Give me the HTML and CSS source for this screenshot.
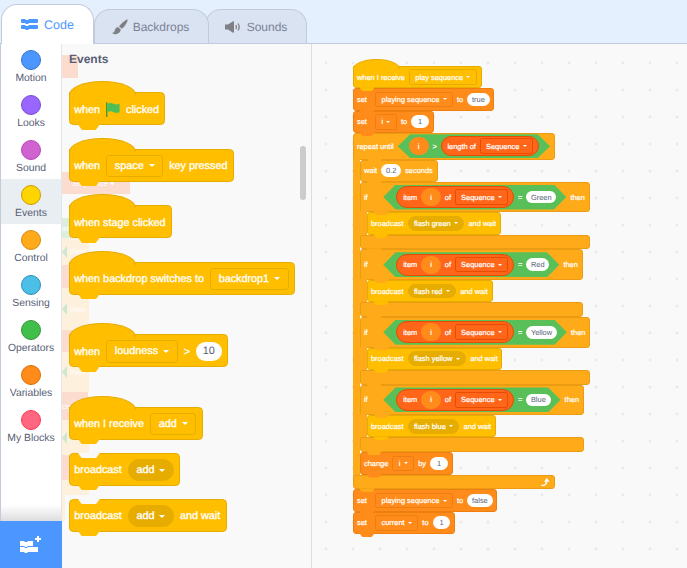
FILE: index.html
```html
<!DOCTYPE html>
<html lang="en">
<head>
  <meta charset="UTF-8">
  <title>Scratch Editor</title>
  <link rel="stylesheet" href="styles.css">
</head>
<body>
  <div class="tabs">
    <div class="tab tab-active">
      <svg class="tab-icon" width="17" height="11" viewBox="0 0 17 11"><path fill="#4c97ff" d="M1 0h3l1 1h2l1-1h8a1 1 0 0 1 1 1v2a1 1 0 0 1-1 1H8L7 5H5L4 4H1a1 1 0 0 1-1-1V1a1 1 0 0 1 1-1zM1 6h3l1 1h2l1-1h8a1 1 0 0 1 1 1v2a1 1 0 0 1-1 1H8l-1 1H5L4 10H1a1 1 0 0 1-1-1V7a1 1 0 0 1 1-1z"/></svg>
      Code
    </div>
    <div class="tab tab-backdrops">
      <svg class="tab-icon" width="16" height="16" viewBox="0 0 16 16"><path fill="#7f8085" d="M15.5.6c.6.5-.6 3.800-3 6.600L9.800 9.800 6.900 7.200 9.600 4.500C12 2.200 14.900.1 15.500.6zM6 8l2.800 2.600C8.500 13.300 6.400 15.500 3 15.300 1.600 15.200.5 14.600 0 13.800c1.500.2 2.300-.6 2.600-2C3 9.800 4.300 8.300 6 8z"/></svg>
      Backdrops
    </div>
    <div class="tab tab-sounds">
      <svg class="tab-icon" width="16" height="12" viewBox="0 0 16 12"><path fill="#7f8085" d="M0 3.500h3L8 .3c.5-.3 1 0 1 .6v10.200c0 .6-.5.9-1 .6L3 8.500H0z"/><path fill="none" stroke="#7f8085" stroke-width="1.300" d="M10.800 4c.8 1.200.8 2.800 0 4M13 2.500c1.400 2 1.400 5 0 7"/></svg>
      Sounds
    </div>
  </div>

  <div class="workspace">
    <div class="sidebar">
      <div class="cat"><span class="dot motion"></span>Motion</div>
      <div class="cat"><span class="dot looks"></span>Looks</div>
      <div class="cat"><span class="dot sound"></span>Sound</div>
      <div class="cat cat-active"><span class="dot event"></span>Events</div>
      <div class="cat"><span class="dot ctrl"></span>Control</div>
      <div class="cat"><span class="dot sensing"></span>Sensing</div>
      <div class="cat"><span class="dot operators"></span>Operators</div>
      <div class="cat"><span class="dot variables"></span>Variables</div>
      <div class="cat"><span class="dot myblocks"></span>My Blocks</div>
      <div class="side-fade"></div>
      <div class="ext-btn">
        <svg width="22" height="18" viewBox="0 0 22 18"><path fill="#fff" d="M0 5h4l1 1h2l1-1h5v5H8l-1 1H5L4 10H0zM0 11h4l1 1h2l1-1h10v5H8l-1 1H5l-1-1H0zM15 2h2V0h2v2h2v2h-2v2h-2V4h-2z"/></svg>
      </div>
    </div>

    <div class="palette">
      <div class="ghosts">
        <div class="ghost pink g-first"></div>
        <div class="ghost pink g-seq">Sequence ▾</div>
        <div class="ghost green g-green">ar</div>
        <div class="ghost peach g-27"><i></i>then</div>
        <div class="ghost pink g-23">e</div>
        <div class="ghost peach g-42"><i></i>then</div>
        <div class="ghost pink g-22"></div>
        <div class="ghost peach g-40"><i></i>then</div>
        <div class="ghost pink g-28">ce</div>
        <div class="ghost peach g-35"><i></i>then</div>
        <div class="ghost pink g-25"></div>
        <div class="ghost peach g-15"></div>
        <div class="ghost peach g-thin"></div>
      </div>

      <div class="palette-title">Events</div>
      <div class="palette-blocks">
        <div class="block events hat">
          when
          <svg class="flag" viewBox="0 0 15 16"><path fill="#45993d" d="M0 0h1.500v16H0z"/><path fill="#4cbf56" d="M1.500 1.500C4 .2 6 .5 8 1.500s4 1 6.500 0v9c-2.500 1-4.500 1-6.500 0s-4-1.300-6.500 0z"/></svg>
          clicked
        </div>
        <div class="block events hat">when <span class="menu">space <b class="caret"></b></span> key pressed</div>
        <div class="block events hat">when stage clicked</div>
        <div class="block events hat">when backdrop switches to <span class="menu">backdrop1 <b class="caret"></b></span></div>
        <div class="block events hat far">when <span class="menu">loudness <b class="caret"></b></span> &gt; <span class="num">10</span></div>
        <div class="block events hat far">when I receive <span class="menu">add <b class="caret"></b></span></div>
        <div class="block events notch">broadcast <span class="round-menu">add <b class="caret"></b></span></div>
        <div class="block events notch">broadcast <span class="round-menu">add <b class="caret"></b></span> and wait</div>
      </div>
      <div class="scroll-thumb"></div>
    </div>

    <div class="scripts">
      <div class="stack">
        <div class="block events hat">when I receive <span class="menu">play sequence <b class="caret"></b></span></div>
        <div class="block vars"><span class="lbl-set">set</span> <span class="menu">playing sequence <b class="caret"></b></span> to <span class="num">true</span></div>
        <div class="block vars"><span class="lbl-set">set</span> <span class="menu">i <b class="caret"></b></span> to <span class="num one">1</span></div>

        <div class="c-block control">
          <div class="block c-head head-repeat">
            repeat until
            <span class="bool bool-repeat">
              <span class="oval var-oval">i</span> &gt;
              <span class="oval list-oval">length of <span class="menu">Sequence <b class="caret"></b></span></span>
            </span>
          </div>
          <div class="c-mouth">
            <div class="block">wait <span class="num">0.2</span> seconds</div>

            <div class="c-block">
              <div class="block c-head">
                <span class="lbl-if">if</span>
                <span class="bool">
                  <span class="oval list-oval">item <span class="oval var-oval">i</span> of <span class="menu">Sequence <b class="caret"></b></span></span>
                  = <span class="num">Green</span>
                </span>
                then
              </div>
              <div class="c-mouth">
                <div class="block events">broadcast <span class="round-menu">flash green <b class="caret"></b></span> and wait</div>
              </div>
              <div class="block c-foot"></div>
            </div>

            <div class="c-block">
              <div class="block c-head">
                <span class="lbl-if">if</span>
                <span class="bool">
                  <span class="oval list-oval">item <span class="oval var-oval">i</span> of <span class="menu">Sequence <b class="caret"></b></span></span>
                  = <span class="num">Red</span>
                </span>
                then
              </div>
              <div class="c-mouth">
                <div class="block events">broadcast <span class="round-menu">flash red <b class="caret"></b></span> and wait</div>
              </div>
              <div class="block c-foot"></div>
            </div>

            <div class="c-block">
              <div class="block c-head">
                <span class="lbl-if">if</span>
                <span class="bool">
                  <span class="oval list-oval">item <span class="oval var-oval">i</span> of <span class="menu">Sequence <b class="caret"></b></span></span>
                  = <span class="num">Yellow</span>
                </span>
                then
              </div>
              <div class="c-mouth">
                <div class="block events">broadcast <span class="round-menu">flash yellow <b class="caret"></b></span> and wait</div>
              </div>
              <div class="block c-foot"></div>
            </div>

            <div class="c-block">
              <div class="block c-head">
                <span class="lbl-if">if</span>
                <span class="bool">
                  <span class="oval list-oval">item <span class="oval var-oval">i</span> of <span class="menu">Sequence <b class="caret"></b></span></span>
                  = <span class="num">Blue</span>
                </span>
                then
              </div>
              <div class="c-mouth">
                <div class="block events">broadcast <span class="round-menu">flash blue <b class="caret"></b></span> and wait</div>
              </div>
              <div class="block c-foot"></div>
            </div>

            <div class="block vars">change <span class="menu">i <b class="caret"></b></span> by <span class="num one">1</span></div>
          </div>
          <div class="block c-foot foot-loop">
            <svg class="loop" viewBox="0 0 10 9"><path fill="none" stroke="#fff" stroke-width="1.600" d="M0.500 7.800c3 .4 5.200-.6 5.600-4.300"/><path fill="#fff" d="M3.300 4 6.200 0 9.300 4z"/></svg>
          </div>
        </div>

        <div class="block vars"><span class="lbl-set">set</span> <span class="menu">playing sequence <b class="caret"></b></span> to <span class="num">false</span></div>
        <div class="block vars"><span class="lbl-set">set</span> <span class="menu">current <b class="caret"></b></span> to <span class="num one">1</span></div>
      </div>
    </div>
  </div>
</body>
</html>
```

FILE: styles.css
```css
* {
  box-sizing: border-box;
}

body {
  margin: 0;
  height: 568px;
  overflow: hidden;
  background-color: #e5f0ff;
  font-family: "Liberation Sans", Arial, sans-serif;
  color: #575e75;
  text-rendering: geometricPrecision;
}

/* Tabs */
.tabs {
  display: flex;
  align-items: flex-end;
  height: 43px;
  padding-left: 1px;
}

.tab {
  display: flex;
  align-items: center;
  justify-content: center;
  gap: 6px;
  height: 34px;
  font-size: 12px;
  color: #7c8296;
  background-color: #d9e3f2;
  border: 1px solid #c1cbda;
  border-bottom: none;
  border-radius: 16px 16px 0 0;
}

.tab-active {
  position: relative;
  z-index: 2;
  width: 93px;
  height: 40px;
  margin-bottom: -1px;
  font-size: 12.5px;
  color: #4c97ff;
  background-color: #fff;
}

.tab-backdrops {
  position: relative;
  z-index: 1;
  width: 115px;
  gap: 5px;
  padding-right: 2px;
}

.tab-sounds {
  width: 102px;
  margin-left: -4px;
}

/* Layout */
.workspace {
  display: flex;
  height: 525px;
  background-color: #f9f9f9;
  border-top: 1px solid #c1cbda;
}

.sidebar {
  display: flex;
  flex-direction: column;
  flex: none;
  width: 62px;
  background-color: #fff;
  border-left: 1px solid #c1cbda;
  border-right: 1px solid #e2e6ec;
}

.cat {
  display: flex;
  flex-direction: column;
  align-items: center;
  height: 45px;
  padding-top: 6px;
  font-size: 10.4px;
  line-height: 13px;
  white-space: nowrap;
}

.cat-active {
  background-color: #e9eef2;
}

.dot {
  width: 20px;
  height: 20px;
  margin-bottom: 2px;
  border-radius: 50%;
  border: 1px solid;
}

.motion { background-color: #4c97ff; border-color: #3373cc; }
.looks { background-color: #9966ff; border-color: #774dcb; }
.sound { background-color: #cf63cf; border-color: #bd42bd; }
.event { background-color: #ffd500; border-color: #cc9900; }
.ctrl { background-color: #ffab19; border-color: #cf8b17; }
.sensing { background-color: #4cbfe6; border-color: #2e8eb8; }
.operators { background-color: #40bf4a; border-color: #389438; }
.variables { background-color: #ff8c1a; border-color: #db6e00; }
.myblocks { background-color: #ff6680; border-color: #ff3355; }

.side-fade {
  flex: 1;
  background: linear-gradient(to bottom, #fff 0, #fff 56px, #ddd 100%);
}

.ext-btn {
  display: flex;
  align-items: center;
  justify-content: center;
  flex: none;
  height: 47px;
  margin: 0 -1px;
  background-color: #4c97ff;
}

/* Palette */
.palette {
  position: relative;
  flex: none;
  width: 250px;
  padding-left: 7px;
  overflow: hidden;
  border-right: 1px solid #ddd;
}

.palette-title {
  position: relative;
  height: 24.5px;
  line-height: 30px;
  font-size: 12px;
  font-weight: bold;
}

.palette-blocks {
  position: relative;
  display: flex;
  flex-direction: column;
  align-items: flex-start;
  font-size: 10.8px;
}

.palette-blocks .block {
  height: 33px;
  margin-top: 13px;
  padding-top: 2px;
}

.palette-blocks .hat {
  margin-top: 23.5px;
}

.palette-blocks .far {
  margin-top: 39.5px;
}

.scroll-thumb {
  position: absolute;
  top: 102px;
  left: 238px;
  width: 6px;
  height: 54px;
  border-radius: 3px;
  background-color: #ccc;
}

/* Script blocks showing faintly behind the palette */
.ghosts {
  position: absolute;
  top: 0;
  left: 0;
  display: flex;
  flex-direction: column;
  align-items: flex-start;
  font-size: 8px;
  color: #fff;
}

.ghost {
  display: flex;
  align-items: center;
  gap: 3px;
  overflow: hidden;
  white-space: nowrap;
}

.ghost i {
  width: 0;
  height: 0;
  border-style: solid;
  border-width: 6px 5px 6px 0;
  border-color: transparent #cfe6cf transparent transparent;
}

.pink { background-color: #fbdccf; }
.peach { background-color: #fdf0dd; }
.green { background-color: #dcefdc; }

.g-first { width: 16px; height: 23px; margin-top: 11px; }
.g-seq { width: 68px; height: 22px; margin-top: 94px; padding-left: 10px; }
.g-green { width: 20px; height: 20px; margin-top: 24px; }
.g-27 { width: 27px; height: 27px; }
.g-23 { width: 20px; height: 23px; justify-content: flex-end; }
.g-42 { width: 27px; height: 42px; }
.g-22 { width: 18px; height: 22px; }
.g-40 { width: 27px; height: 40px; }
.g-28 { width: 26px; height: 28px; }
.g-35 { width: 27px; height: 35px; }
.g-25 { width: 20px; height: 25px; }
.g-15 { width: 27px; height: 15px; }
.g-thin { width: 3px; height: 25px; }

/* Script area */
.scripts {
  flex: 1;
  padding: 22px 0 0 41px;
  background-image: radial-gradient(circle, #e4e4e4 1px, transparent 1.2px);
  background-size: 27px 27px;
  background-position: 0.5px 5.5px;
}

.stack {
  display: flex;
  flex-direction: column;
  align-items: flex-start;
  font-size: 7.43px;
}

/* Blocks, everything in em so the palette and the scripts share one set of rules */
.block {
  --fill: inherit;
  position: relative;
  display: inline-flex;
  align-items: center;
  flex: none;
  gap: 0.55em;
  width: max-content;
  height: 3em;
  padding: 0 0.5em 0 0.4em;
  color: #fff;
  white-space: nowrap;
  -webkit-text-stroke: 0.03em #fff;
  background-color: var(--fill);
  border: 1px solid var(--edge);
  border-radius: 0.4em;
}

.events {
  --fill: #ffbf00;
  --edge: #e6ac00;
  --menu: #e6ac00;
}

.vars {
  --fill: #ff8c1a;
  --edge: #ec7f10;
}

.control,
.c-block .block:not(.events):not(.vars) {
  --fill: #ffab19;
  --edge: #ec9c13;
}

/* bottom tab */
.block::after {
  content: "";
  position: absolute;
  z-index: 1;
  left: 0.7em;
  bottom: -0.55em;
  width: 2.1em;
  height: 0.55em;
  background-color: var(--fill);
  clip-path: polygon(0 0, 100% 0, 80% 100%, 20% 100%);
}

/* top notch, only seen on loose blocks */
.notch::before {
  content: "";
  position: absolute;
  top: -1px;
  left: 0.7em;
  width: 2.1em;
  height: 0.55em;
  background-color: #f9f9f9;
  clip-path: polygon(0 0, 100% 0, 80% 100%, 20% 100%);
}

.hat {
  border-top-left-radius: 0;
}

.hat::before {
  content: "";
  position: absolute;
  top: -1.1em;
  left: -1px;
  width: 6em;
  height: calc(1.1em + 1px);
  background-color: var(--fill);
  border: 1px solid var(--edge);
  border-bottom: none;
  border-radius: 50% 50% 0 0 / 100% 100% 0 0;
}

.stack > .hat {
  margin-top: 0;
}

.flag {
  width: 1.3em;
  height: 1.45em;
}

.menu {
  display: inline-flex;
  align-items: center;
  gap: 0.45em;
  height: 2.1em;
  padding: 0 0.72em;
  border: 1px solid var(--edge);
  border-radius: 0.3em;
}

.round-menu {
  display: inline-flex;
  align-items: center;
  gap: 0.45em;
  height: 2em;
  padding: 0 0.72em;
  background-color: var(--menu);
  border: 1px solid var(--edge);
  border-radius: 1em;
}

.caret {
  width: 0;
  height: 0;
  border-style: solid;
  border-width: 0.36em 0.36em 0 0.36em;
  border-color: #fff transparent transparent transparent;
}

.num {
  display: inline-flex;
  align-items: center;
  justify-content: center;
  height: 1.7em;
  padding: 0 0.64em;
  color: #575e75;
  -webkit-text-stroke: 0;
  background-color: #fff;
  border-radius: 1em;
}

.num.one {
  min-width: 2.4em;
}

.lbl-set {
  min-width: 1.9em;
}

.lbl-if {
  min-width: 2.05em;
}

/* C shaped blocks */
.c-block {
  display: inline-flex;
  flex-direction: column;
  flex: none;
  width: max-content;
}

.c-head {
  width: auto;
  height: 4.1em;
  border-bottom-left-radius: 0;
}

.head-repeat {
  height: 3.6em;
}

.c-head::after {
  left: 1.7em;
}

.c-mouth {
  position: relative;
  display: flex;
  flex-direction: column;
  align-items: flex-start;
  width: 1em;
  margin-top: -1px;
  padding-top: 1px;
  border-left: 1em solid #ffab19;
}

.c-foot {
  width: auto;
  height: 2em;
  border-top-left-radius: 0;
  justify-content: flex-end;
}

.loop {
  width: 1.25em;
  height: 1.15em;
}

.bool {
  display: inline-flex;
  align-items: center;
  gap: 0.5em;
  height: 3.36em;
  padding: 0 1.35em 0 1.75em;
  background-color: #59c059;
  clip-path: polygon(0 50%, 1.65em 0, calc(100% - 1.65em) 0, 100% 50%, calc(100% - 1.65em) 100%, 1.65em 100%);
}

.bool-repeat {
  height: 3.2em;
  padding: 0 1.45em;
}

.oval {
  display: inline-flex;
  align-items: center;
  gap: 0.5em;
  border-radius: 1.6em;
}

.list-oval {
  height: 2.95em;
  padding: 0 0.7em 0 0.8em;
  --edge: #e64d00;
  background-color: #ff661a;
  border: 1px solid #e64d00;
}

.bool-repeat .list-oval {
  height: 2.7em;
}

.var-oval {
  height: 2.4em;
  padding: 0 1.25em;
  background-color: #ff8c1a;
}
```
